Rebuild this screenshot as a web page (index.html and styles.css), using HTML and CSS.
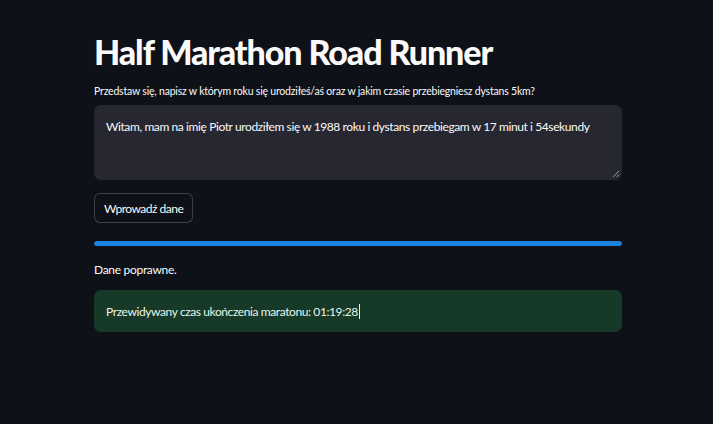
FILE: index.html
```html
<!DOCTYPE html>
<html lang="pl">
<head>
<meta charset="utf-8">
<link rel="stylesheet" href="styles.css">
</head>
<body>
<main class="main">
  <h1 class="title">Half Marathon Road Runner</h1>
  <label class="label">Przedstaw się, napisz w którym roku się urodziłeś/aś oraz w jakim czasie przebiegniesz dystans 5km?</label>
  <div class="textarea">
    <span class="ta-text">Witam, mam na imię Piotr urodziłem się w 1988 roku i dystans przebiegam w 17 minut i 54sekundy</span>
    <svg class="grip" width="8" height="8" viewBox="0 0 8 8"><path d="M7 1L1 7M7 4.5L4.5 7" stroke="#9a9aa3" stroke-width="1"/></svg>
  </div>
  <button class="btn">Wprowadź dane</button>
  <div class="progress"><div class="bar" style="width:100%"></div></div>
  <p class="msg">Dane poprawne.</p>
  <div class="success"><span>Przewidywany czas ukończenia maratonu: 01:19:28</span><span class="caret"></span></div>
</main>
</body>
</html>
```
FILE: styles.css
```css
html, body {
  margin: 0;
  padding: 0;
  background: #0e1117;
  color: #fafafa;
  font-family: "Lato", "Noto Sans", sans-serif;
}
.main {
  width: 528px;
  padding-left: 94px;
  padding-top: 30px;
  display: flex;
  flex-direction: column;
}
.title {
  margin: 0;
  font-size: 34px;
  font-weight: 900;
  line-height: 44px;
  letter-spacing: -1.1px;
}
.label {
  margin-top: 9px;
  font-size: 10.5px;
  line-height: 16px;
  letter-spacing: -0.2px;
}
.textarea {
  position: relative;
  margin-top: 6px;
  height: 75px;
  background: #262730;
  border-radius: 7px;
  box-sizing: border-box;
  padding: 13px 12px;
  font-size: 12px;
  line-height: 18px;
  letter-spacing: -0.4px;
}
.grip {
  position: absolute;
  right: 2px;
  bottom: 2px;
}
.btn {
  align-self: flex-start;
  margin-top: 13px;
  height: 30px;
  padding: 0 9px;
  background: #0e1117;
  color: #fafafa;
  border: 1px solid rgba(250,250,250,0.2);
  border-radius: 6px;
  font-family: inherit;
  font-size: 12px;
  letter-spacing: -0.5px;
}
.progress {
  margin-top: 18px;
  height: 5px;
  border-radius: 3px;
  background: #262730;
  overflow: hidden;
}
.bar {
  height: 100%;
  background: #1c83e1;
  border-radius: 3px;
}
.msg {
  margin: 16px 0 0;
  font-size: 12px;
  line-height: 16px;
  letter-spacing: -0.3px;
}
.success {
  margin-top: 12px;
  height: 42px;
  box-sizing: border-box;
  padding: 0 12px;
  display: flex;
  align-items: center;
  background: #173928;
  border-radius: 7px;
  color: #e6f5ea;
  font-size: 12px;
  letter-spacing: -0.4px;
}
.caret {
  display: inline-block;
  width: 1px;
  height: 15px;
  margin-left: 1px;
  background: #e6f5ea;
}
```
